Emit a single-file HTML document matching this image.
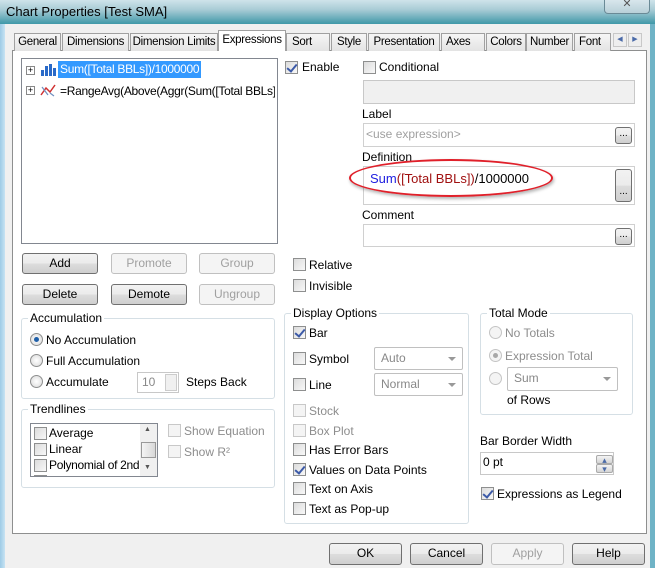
<!DOCTYPE html>
<html><head><meta charset="utf-8"><style>
*{box-sizing:border-box;margin:0;padding:0}
body{width:655px;height:568px;overflow:hidden;position:relative;font-family:"Liberation Sans",Arial,sans-serif;font-size:12px;color:#000;background:#f0f0f0}
.a{position:absolute;white-space:nowrap}
.tb{position:absolute;left:0;top:0;width:655px;height:24px;background:linear-gradient(180deg,#cfe3ea 0%,#a9ccd6 40%,#3f98a8 100%)}
.fl{position:absolute;left:0;top:24px;width:5px;height:544px;background:linear-gradient(90deg,#9ecbe6,#c7e3f3)}
.fr{position:absolute;right:0;top:24px;width:5px;height:544px;background:#6fb3c6}
.tab{position:absolute;top:33px;height:18px;border:1px solid #a0a0a0;border-bottom:none;background:linear-gradient(#f6f6f6,#e3e3e3);text-align:center;line-height:16px;font-size:11.5px;letter-spacing:-0.3px;white-space:nowrap;overflow:hidden}
.panel{position:absolute;left:12px;top:50px;width:635px;height:484px;background:#fff;border:1px solid #8e8f8f}
.cb{position:absolute;width:13px;height:13px;border:1px solid #8e8f8f;background:linear-gradient(135deg,#dcdcdc,#f8f8f8)}
.cb.ck::after{content:"";position:absolute;left:3px;top:0px;width:4px;height:8px;border:solid #3c5aa8;border-width:0 2px 2px 0;transform:rotate(40deg)}
.cb.dis{border-color:#c8c8c8;background:#f4f4f4}
.rd{position:absolute;width:13px;height:13px;border-radius:50%;border:1px solid #8e8f8f;background:radial-gradient(#fff,#d8d8d8)}
.rd.on::after{content:"";position:absolute;left:3px;top:3px;width:5px;height:5px;border-radius:50%;background:#1f5fa8}
.rd.dis{border-color:#c4c4c4;background:#f4f4f4}
.rd.dis.on::after{background:#a8a8a8}
.btn{position:absolute;height:21px;border:1px solid #707070;border-radius:3px;background:linear-gradient(#f2f2f2 0%,#ebebeb 50%,#dddddd 51%,#cfcfcf 100%);text-align:center;line-height:19px}
.btn.dis{border-color:#c0c0c0;background:#f4f4f4;color:#a0a0a0}
.box{position:absolute;border:1px solid #abadb3;background:#fff}
.grp{position:absolute;border:1px solid #d5dfe5;border-radius:3px}
.gl{position:absolute;background:#fff;padding:0 2px}
.g{color:#8d8d8d}
.dd{position:absolute;border:1px solid #c0c0c0;border-radius:2px;background:#fff;color:#888;padding-left:6px;line-height:20px}
.dd::after{content:"";position:absolute;right:6px;top:9px;border:4px solid transparent;border-top:4px solid #999}
.eb{position:absolute;width:17px;border:1px solid #707070;border-radius:2px;background:linear-gradient(#f4f4f4,#d4d4d4);text-align:center;font-size:9px;line-height:8px}
</style></head><body>
<div class="tb"></div>
<div class="a" style="left:6px;top:4px;font-size:13px;color:#000">Chart Properties [Test SMA]</div>
<div class="a" style="left:604px;top:0;width:46px;height:14px;border:1px solid #6a8a96;border-top:none;border-radius:0 0 4px 4px;background:linear-gradient(#d8e6ec,#b8d0d8);text-align:center;font-size:11px;line-height:9px;color:#555">✕</div>
<div class="fl"></div><div class="fr"></div>

<div class="panel"></div>
<div class="tab" style="left:14px;width:47px">General</div>
<div class="tab" style="left:62px;width:67px">Dimensions</div>
<div class="tab" style="left:130px;width:88px">Dimension Limits</div>
<div class="tab" style="left:218px;top:30px;height:21px;width:68px;background:#fff;line-height:18px;z-index:2">Expressions</div>
<div class="tab" style="left:286px;width:44px;text-align:left;padding-left:5px">Sort</div>
<div class="tab" style="left:331px;width:36px">Style</div>
<div class="tab" style="left:368px;width:72px">Presentation</div>
<div class="tab" style="left:441px;width:44px;text-align:left;padding-left:4px">Axes</div>
<div class="tab" style="left:486px;width:40px">Colors</div>
<div class="tab" style="left:526px;width:47px">Number</div>
<div class="tab" style="left:574px;width:37px;text-align:left;padding-left:4px">Font</div>
<div class="a" style="left:613px;top:33px;width:14px;height:14px;border:1px solid #c8c8c8;background:#eee;font-size:7px;line-height:12px;text-align:center;color:#4a6aa8">◀</div>
<div class="a" style="left:628px;top:33px;width:14px;height:14px;border:1px solid #c8c8c8;background:#eee;font-size:7px;line-height:12px;text-align:center;color:#4a6aa8">▶</div>

<!-- expression list -->
<div class="box" style="left:21px;top:58px;width:257px;height:186px;border-color:#828790"></div>
<div class="a" style="left:26px;top:66px;width:9px;height:9px;border:1px solid #888;font-size:9px;line-height:7px;text-align:center;background:#fff">+</div>
<svg class="a" style="left:40px;top:63px" width="16" height="14"><rect x="1" y="7" width="3" height="6" fill="#2a6ac8"/><rect x="5" y="3" width="3" height="10" fill="#2a6ac8"/><rect x="9" y="1" width="3" height="12" fill="#2a6ac8"/><rect x="13" y="5" width="3" height="8" fill="#2a6ac8"/></svg>
<div class="a" style="left:58px;top:61px;height:17px;background:#3399ff;color:#fff;padding:0 2px;line-height:17px;letter-spacing:-0.3px">Sum([Total BBLs])/1000000</div>
<div class="a" style="left:26px;top:86px;width:9px;height:9px;border:1px solid #888;font-size:9px;line-height:7px;text-align:center;background:#fff">+</div>
<svg class="a" style="left:40px;top:83px" width="16" height="14"><path d="M1 12 L6 5 L10 9 L15 2" stroke="#d03030" stroke-width="1.5" fill="none"/><path d="M2 4 L8 12 M10 10 L14 13" stroke="#7090c0" stroke-width="1.2" fill="none"/></svg>
<div class="a" style="left:60px;top:84px;letter-spacing:-0.3px;width:215px;overflow:hidden">=RangeAvg(Above(Aggr(Sum([Total BBLs]),</div>

<div class="cb ck" style="left:285px;top:61px"></div><div class="a" style="left:302px;top:60px">Enable</div>
<div class="cb" style="left:363px;top:61px"></div><div class="a" style="left:379px;top:60px">Conditional</div>
<div class="a" style="left:363px;top:80px;width:272px;height:24px;border:1px solid #c8c8c8;background:#f0f0f0"></div>

<div class="a" style="left:362px;top:107px">Label</div>
<div class="box" style="left:363px;top:123px;width:272px;height:24px;border-color:#d0d0d0"></div>
<div class="a g" style="left:366px;top:127px;color:#a0a0a0">&lt;use expression&gt;</div>
<div class="btn" style="left:615px;top:127px;width:17px;height:17px;line-height:12px;font-size:10px">...</div>

<div class="a" style="left:362px;top:150px">Definition</div>
<div class="box" style="left:363px;top:166px;width:272px;height:39px;border-color:#d0d0d0"></div>
<div class="a" style="left:370px;top:171px;font-size:13px"><span style="color:#2020e0">Sum</span><span style="color:#a01010">([Total BBLs])</span>/1000000</div>
<div class="btn" style="left:615px;top:169px;width:17px;height:33px;line-height:44px;font-size:10px">...</div>
<div class="a" style="left:349px;top:159px;width:204px;height:38px;border:2px solid #e0202a;border-radius:50%;box-shadow:1px 2px 3px rgba(0,0,0,.3)"></div>

<div class="a" style="left:362px;top:208px">Comment</div>
<div class="box" style="left:363px;top:224px;width:272px;height:23px;border-color:#d0d0d0"></div>
<div class="btn" style="left:615px;top:228px;width:17px;height:17px;line-height:12px;font-size:10px">...</div>

<div class="btn" style="left:22px;top:253px;width:76px">Add</div>
<div class="btn dis" style="left:111px;top:253px;width:76px">Promote</div>
<div class="btn dis" style="left:199px;top:253px;width:76px">Group</div>
<div class="btn" style="left:22px;top:284px;width:76px">Delete</div>
<div class="btn" style="left:111px;top:284px;width:76px">Demote</div>
<div class="btn dis" style="left:199px;top:284px;width:76px">Ungroup</div>

<div class="cb" style="left:293px;top:258px"></div><div class="a" style="left:309px;top:258px">Relative</div>
<div class="cb" style="left:293px;top:279px"></div><div class="a" style="left:309px;top:279px">Invisible</div>

<!-- Accumulation -->
<div class="grp" style="left:21px;top:318px;width:254px;height:81px"></div>
<div class="gl" style="left:28px;top:311px">Accumulation</div>
<div class="rd on" style="left:30px;top:333px"></div><div class="a" style="left:46px;top:333px">No Accumulation</div>
<div class="rd" style="left:30px;top:354px"></div><div class="a" style="left:46px;top:354px">Full Accumulation</div>
<div class="rd" style="left:30px;top:375px"></div><div class="a" style="left:46px;top:375px">Accumulate</div>
<div class="a" style="left:137px;top:372px;width:42px;height:21px;border:1px solid #c8c8c8;color:#888;padding:2px 4px;background:#fff">10</div>
<div class="a" style="left:165px;top:374px;width:12px;height:17px;border:1px solid #ccc;background:#f0f0f0"></div>
<div class="a" style="left:186px;top:375px">Steps Back</div>

<!-- Trendlines -->
<div class="grp" style="left:21px;top:409px;width:254px;height:79px"></div>
<div class="gl" style="left:28px;top:402px">Trendlines</div>
<div class="a" style="left:30px;top:423px;width:128px;height:54px;border:1px solid #828790;background:#fff;overflow:hidden">
 <div class="cb" style="left:3px;top:3px"></div><div class="a" style="left:18px;top:2px">Average</div>
 <div class="cb" style="left:3px;top:19px"></div><div class="a" style="left:18px;top:18px">Linear</div>
 <div class="cb" style="left:3px;top:35px"></div><div class="a" style="left:18px;top:34px;letter-spacing:-0.3px">Polynomial of 2nd d</div>
 <div class="cb" style="left:3px;top:51px"></div><div class="a" style="left:18px;top:50px">Polynomial of 3rd d</div>
 <div class="a" style="left:109px;top:0;width:17px;height:52px;background:#f0f0f0"></div>
 <div class="a" style="left:110px;top:18px;width:15px;height:16px;border:1px solid #999;background:linear-gradient(90deg,#f4f4f4,#d8d8d8)"></div>
 <div class="a" style="left:113px;top:2px;font-size:7px;color:#555">▲</div>
 <div class="a" style="left:113px;top:40px;font-size:7px;color:#555">▼</div>
</div>
<div class="cb dis" style="left:168px;top:424px"></div><div class="a g" style="left:184px;top:424px">Show Equation</div>
<div class="cb dis" style="left:168px;top:445px"></div><div class="a g" style="left:184px;top:445px">Show R²</div>

<!-- Display Options -->
<div class="grp" style="left:284px;top:313px;width:185px;height:211px"></div>
<div class="gl" style="left:291px;top:306px">Display Options</div>
<div class="cb ck" style="left:293px;top:326px"></div><div class="a" style="left:309px;top:326px">Bar</div>
<div class="cb" style="left:293px;top:352px"></div><div class="a" style="left:309px;top:352px">Symbol</div>
<div class="dd" style="left:374px;top:347px;width:89px;height:23px">Auto</div>
<div class="cb" style="left:293px;top:378px"></div><div class="a" style="left:309px;top:378px">Line</div>
<div class="dd" style="left:374px;top:373px;width:89px;height:23px">Normal</div>
<div class="cb dis" style="left:293px;top:404px"></div><div class="a g" style="left:309px;top:404px">Stock</div>
<div class="cb dis" style="left:293px;top:424px"></div><div class="a g" style="left:309px;top:424px">Box Plot</div>
<div class="cb" style="left:293px;top:443px"></div><div class="a" style="left:309px;top:443px">Has Error Bars</div>
<div class="cb ck" style="left:293px;top:463px"></div><div class="a" style="left:309px;top:463px">Values on Data Points</div>
<div class="cb" style="left:293px;top:482px"></div><div class="a" style="left:309px;top:482px">Text on Axis</div>
<div class="cb" style="left:293px;top:502px"></div><div class="a" style="left:309px;top:502px">Text as Pop-up</div>

<!-- Total Mode -->
<div class="grp" style="left:480px;top:313px;width:153px;height:102px"></div>
<div class="gl" style="left:487px;top:306px">Total Mode</div>
<div class="rd dis" style="left:489px;top:326px"></div><div class="a g" style="left:505px;top:326px">No Totals</div>
<div class="rd dis on" style="left:489px;top:349px"></div><div class="a g" style="left:505px;top:349px">Expression Total</div>
<div class="rd dis" style="left:489px;top:372px"></div>
<div class="dd" style="left:507px;top:367px;width:111px;height:24px">Sum</div>
<div class="a" style="left:507px;top:393px">of Rows</div>

<div class="a" style="left:480px;top:434px">Bar Border Width</div>
<div class="box" style="left:480px;top:452px;width:134px;height:23px;border-color:#c8c8c8"></div>
<div class="a" style="left:483px;top:455px">0 pt</div>
<div class="eb" style="left:596px;top:455px;height:9px;border-color:#aaa;color:#4a6aa8">▴</div>
<div class="eb" style="left:596px;top:464px;height:9px;border-color:#aaa;color:#4a6aa8">▾</div>
<div class="cb ck" style="left:481px;top:487px"></div><div class="a" style="left:497px;top:487px">Expressions as Legend</div>

<div class="btn" style="left:329px;top:543px;width:73px;height:22px">OK</div>
<div class="btn" style="left:410px;top:543px;width:73px;height:22px">Cancel</div>
<div class="btn dis" style="left:491px;top:543px;width:73px;height:22px">Apply</div>
<div class="btn" style="left:572px;top:543px;width:73px;height:22px">Help</div>
</body></html>
